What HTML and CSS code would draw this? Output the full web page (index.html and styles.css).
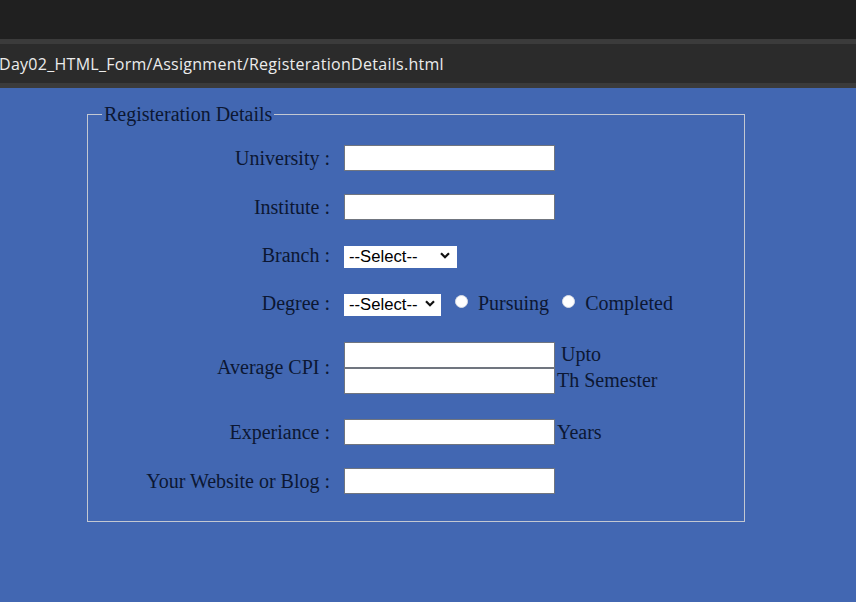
FILE: index.html
```html
<!DOCTYPE html>
<html lang="en">
<head>
<meta charset="utf-8">
<title>Registeration Details</title>
<link rel="stylesheet" href="styles.css">
</head>
<body>
<div class="chrome-top"></div>
<div class="chrome-sep"></div>
<div class="chrome-url"><span class="url-text">Day02_HTML_Form/Assignment/RegisterationDetails.html</span></div>
<div class="chrome-sep"></div>
<main class="page">
  <fieldset class="box">
    <legend class="box-title">Registeration Details</legend>
    <div class="rows">
      <div class="row r-input">
        <label class="lbl">University :</label>
        <div class="ctl"><input class="txt" type="text"></div>
      </div>
      <div class="row r-input">
        <label class="lbl">Institute :</label>
        <div class="ctl"><input class="txt" type="text"></div>
      </div>
      <div class="row r-branch">
        <label class="lbl">Branch :</label>
        <div class="ctl">
          <div class="sel sel-wide">
            <select class="sel-box"><option>--Select--</option></select>
            <svg class="chev" width="10" height="7" viewBox="0 0 10 7"><path d="M1 1.2 L5 5.2 L9 1.2" fill="none" stroke="#111" stroke-width="2.2"/></svg>
          </div>
        </div>
      </div>
      <div class="row r-degree">
        <label class="lbl">Degree :</label>
        <div class="ctl">
          <div class="sel sel-narrow">
            <select class="sel-box"><option>--Select--</option></select>
            <svg class="chev" width="10" height="7" viewBox="0 0 10 7"><path d="M1 1.2 L5 5.2 L9 1.2" fill="none" stroke="#111" stroke-width="2.2"/></svg>
          </div>
          <input class="radio" type="radio" name="deg"><span class="rtext">Pursuing</span>
          <input class="radio" type="radio" name="deg"><span class="rtext">Completed</span>
        </div>
      </div>
      <div class="row r-cpi">
        <label class="lbl">Average CPI :</label>
        <div class="ctl stack">
          <div class="line"><input class="txt" type="text"><span class="after sp">Upto</span></div>
          <div class="line"><input class="txt" type="text"><span class="after">Th Semester</span></div>
        </div>
      </div>
      <div class="row r-input">
        <label class="lbl">Experiance :</label>
        <div class="ctl line"><input class="txt" type="text"><span class="after">Years</span></div>
      </div>
      <div class="row r-input">
        <label class="lbl">Your Website or Blog :</label>
        <div class="ctl"><input class="txt" type="text"></div>
      </div>
    </div>
  </fieldset>
</main>
</body>
</html>
```
FILE: styles.css
```css
html, body {
  margin: 0;
  padding: 0;
  background: #4267b2;
}
body {
  width: 856px;
  height: 602px;
  overflow: hidden;
  display: flex;
  flex-direction: column;
}
.chrome-top {
  height: 39px;
  background: #202020;
  flex: none;
}
.chrome-sep {
  height: 5px;
  background: #3b3b3b;
  flex: none;
}
.chrome-url {
  height: 39px;
  background: #2b2b2b;
  flex: none;
  display: flex;
  align-items: center;
}
.url-text {
  font-family: "Open Sans", "Noto Sans", sans-serif;
  font-size: 16px;
  color: #ececec;
  letter-spacing: 0.28px;
  margin-left: -1px;
  padding-top: 1px;
}
.page {
  flex: 1;
  background: #4267b2;
  padding: 15px 0 0 87px;
  font-family: "Liberation Serif", "Times New Roman", serif;
  font-size: 20px;
  color: #0c1733;
}
.box {
  box-sizing: border-box;
  width: 658px;
  margin: 0;
  padding: 0 0 27px 0;
  border: 1px solid #c3c8d2;
}
.box-title {
  margin-left: 14px;
  padding: 0 2px;
  line-height: 23px;
}
.rows {
  display: flex;
  flex-direction: column;
  gap: 23px;
  margin-top: 19px;
}
.row {
  display: flex;
  align-items: center;
  gap: 14px;
}
.r-input { height: 26px; }
.r-branch { height: 24px; }
.r-degree { height: 26px; }
.r-cpi { height: 57px; }
.lbl {
  width: 242px;
  text-align: right;
  flex: none;
  line-height: 23px;
}
.ctl {
  display: flex;
  align-items: center;
}
.stack {
  flex-direction: column;
  align-items: flex-start;
}
.line {
  display: flex;
  align-items: center;
}
.txt {
  box-sizing: border-box;
  width: 211px;
  height: 26px;
  margin: 0;
  padding: 1px 3px;
  border: 1px solid #70757f;
  background: #fff;
  font-family: "Liberation Sans", Arial, sans-serif;
  font-size: 16.67px;
  outline: none;
}
.after {
  padding-left: 2px;
  line-height: 23px;
}
.after.sp {
  padding-left: 6px;
}
.sel {
  position: relative;
  height: 22px;
}
.sel-wide { width: 113px; }
.sel-narrow { width: 97px; }
.sel-box {
  appearance: none;
  -webkit-appearance: none;
  box-sizing: border-box;
  width: 100%;
  height: 22px;
  margin: 0;
  padding: 0 0 0 5px;
  border: none;
  border-radius: 0;
  background: #fff;
  color: #000;
  font-family: "Liberation Sans", Arial, sans-serif;
  font-size: 16.67px;
  line-height: 22px;
}
.chev {
  position: absolute;
  right: 6px;
  top: 8px;
  pointer-events: none;
}
.sel-wide .chev { right: 7px; }
.radio {
  appearance: none;
  -webkit-appearance: none;
  box-sizing: border-box;
  width: 13px;
  height: 13px;
  margin: 0 10px 4px 13px;
  border-radius: 50%;
  border: 1px solid #d9dde6;
  background: #fff;
}
.radio:first-of-type {
  margin-left: 14px;
}
.rtext {
  line-height: 23px;
}
```
